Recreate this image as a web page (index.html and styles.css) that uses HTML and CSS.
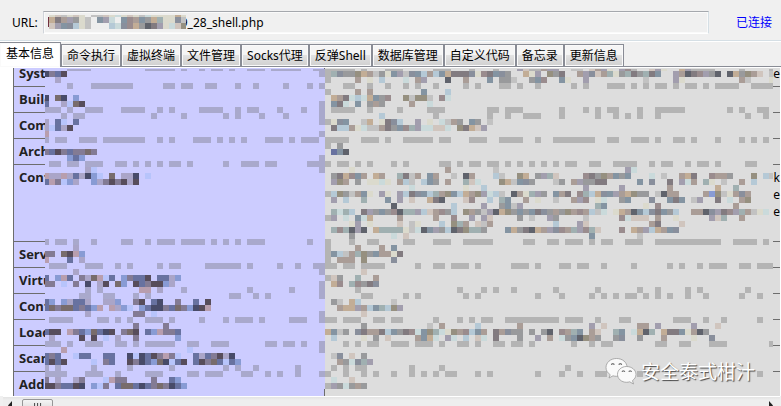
FILE: index.html
```html
<!DOCTYPE html>
<html lang="zh-CN">
<head>
<meta charset="utf-8">
<title>Shell</title>
<link rel="stylesheet" href="styles.css">
</head>
<body>
<header class="bar">
  <label for="url">URL:</label>
  <div class="field">
    <input id="url" type="text" readonly value="9_28_shell.php">
    <svg class="field-mosaic" id="url-mosaic" width="138" height="15" viewBox="48 15 138 15" shape-rendering="crispEdges" aria-hidden="true"></svg>
  </div>
  <span class="state">已连接</span>
</header>
<nav class="tabs">
  <button class="tab active">基本信息</button>
  <button class="tab">命令执行</button>
  <button class="tab">虚拟终端</button>
  <button class="tab">文件管理</button>
  <button class="tab">Socks代理</button>
  <button class="tab">反弹Shell</button>
  <button class="tab">数据库管理</button>
  <button class="tab">自定义代码</button>
  <button class="tab">备忘录</button>
  <button class="tab">更新信息</button>
</nav>
<main class="view">
  <table class="info">
    <tr><th scope="row">Syste</th><td>Se</td></tr>
    <tr><th scope="row">Build</th><td></td></tr>
    <tr><th scope="row">Com</th><td></td></tr>
    <tr><th scope="row">Arch</th><td></td></tr>
    <tr class="tall"><th scope="row">Conf</th><td><div>k</div><div>e</div><div>je</div></td></tr>
    <tr><th scope="row">Serv</th><td></td></tr>
    <tr><th scope="row">Virtu</th><td></td></tr>
    <tr><th scope="row">Conf</th><td></td></tr>
    <tr><th scope="row">Load</th><td></td></tr>
    <tr><th scope="row">Scan</th><td></td></tr>
    <tr><th scope="row">Add</th><td></td></tr>
  </table>
  <svg class="mosaic" id="mosaic" width="728" height="320" viewBox="45 69 728 320" shape-rendering="crispEdges" aria-hidden="true"></svg>
  <div class="mark">
    <svg width="32" height="28" viewBox="0 0 32 28" aria-hidden="true">
      <g stroke="#999" stroke-width=".8">
        <path fill="#fafafa" d="M11.500 1.500C5.500 1.500 1 5.500 1 10.500c0 3 1.600 5.500 4.200 7.200L4 21l4-2.200c1.200.4 2.300.5 3.500.5 6 0 10.500-4 10.500-9s-4.500-8.800-10.500-8.800z"/>
        <path fill="#fafafa" d="M21.500 9.500c-5 0-9 3.500-9 7.900s4 7.900 9 7.900c1.200 0 2.200-.2 3.200-.5L28.500 27l-1-3.400c2.200-1.500 3.500-3.700 3.500-6.200 0-4.400-4.200-7.900-9.500-7.900z"/>
      </g>
      <g fill="none" stroke="#777" stroke-width="1.200">
        <path d="M6.500 8a1.300 1.300 0 0 1 2.600 0M14 8a1.300 1.300 0 0 1 2.600 0M17.200 15a1.200 1.200 0 0 1 2.400 0M24 15a1.200 1.200 0 0 1 2.400 0"/>
      </g>
    </svg>
    <span>安全泰式柑汁</span>
  </div>
</main>
<footer class="scroll" aria-hidden="true">
  <svg width="10" height="8" viewBox="0 0 10 8"><path d="M8 1v9L4 5.500z" fill="#222"/></svg>
  <span class="thumb"><i></i><i></i><i></i></span>
  <svg class="end" width="10" height="8" viewBox="0 0 10 8"><path d="M2 1v9l4-4.500z" fill="#222"/></svg>
</footer>
<script src="mosaic.js"></script>
</body>
</html>
```
FILE: styles.css
```css
* { box-sizing: border-box; }
html, body { height: 100%; }
body {
  margin: 0;
  display: flex;
  flex-direction: column;
  overflow: hidden;
  background: #f0f0f0;
  color: #000;
  font: 12px/16px "Noto Sans", "Noto Sans CJK SC", sans-serif;
}
.bar {
  flex: none;
  display: flex;
  align-items: center;
  gap: 5px;
  padding: 11px 9px 6px 12px;
  border-bottom: 1px solid #d5dfe5;
}
.field { flex: 1; position: relative; display: flex; }
.field input {
  width: 100%;
  height: 23px;
  padding: 0 0 0 137px;
  border: 1px solid #a5a8ad;
  border-color: #a5a8ad #d5dfe5 #fff #d0d4da;
  box-shadow: inset 0 0 0 1px #fafafa;
  background: #f0f0f0;
  font: inherit;
  outline: 0;
}
.field-mosaic { position: absolute; left: 5px; top: 4px; }
.state { color: #00f; margin-left: 22px; }
.tabs {
  flex: none;
  display: flex;
  align-items: flex-end;
  height: 26px;
  padding-top: 1px;
  background: linear-gradient(#fff 1px, #f0f0f0 1px);
  box-shadow: inset 0 -1px #898c95;
}
.tab {
  height: 23px;
  padding: 0 5px;
  border: 1px solid #898c95;
  background: linear-gradient(#f5f5f5 45%, #e2e2e2 50%, #d0d0d0);
  box-shadow: inset 0 0 0 1px #fafafa;
  color: #000;
  font: inherit;
  white-space: nowrap;
}
.tab.active {
  height: 25px;
  padding: 0 6px 2px;
  border-width: 1px 1px 0 0;
  background: #fff;
}
.view {
  flex: 1;
  min-height: 0;
  position: relative;
  overflow: hidden;
  padding: 0 1px 0 13px;
  border-top: 1px solid #fff;
  background: #fff;
}
.info {
  width: 100%;
  margin-top: -7px;
  border-collapse: separate;
  border-spacing: 0;
  border-left: 1px solid #6d6d6d;
  table-layout: fixed;
}
.info tr { height: 26px; }
.info tr.tall { height: 77px; }
.info th, .info td {
  padding: 4px 5px;
  border-bottom: 1px solid #6d6d6d;
  vertical-align: top;
  line-height: 17px;
}
.info th {
  width: 311px;
  border-right: 1px solid #6d6d6d;
  background: #ccf;
  color: #222;
  font-family: "Open Sans", sans-serif;
  font-size: 13px;
  text-align: left;
}
.info td {
  padding-right: 0;
  background: #ddd;
  text-align: right;
}
.mosaic { position: absolute; left: 45px; top: 1px; }
.mark {
  position: absolute;
  right: 26px;
  bottom: 10px;
  display: flex;
  align-items: center;
  gap: 4px;
  color: #fff;
  font: 19px/30px "Noto Sans CJK SC", sans-serif;
  text-shadow: 1px 1px 1px #444;
}
.scroll {
  flex: none;
  display: flex;
  gap: 8px;
  height: 10px;
  margin: 0 1px 0 3px;
  padding: 2px 3px 0 1px;
  border-top: 1px solid #fff;
  background: linear-gradient(#e3e3e3, #eee 3px);
}
.scroll svg { margin-top: 1px; }
.thumb {
  display: flex;
  justify-content: center;
  gap: 1px;
  width: 31px;
  height: 12px;
  padding-top: 3px;
  border: 1px solid #979797;
  border-radius: 2px;
  background: linear-gradient(#f5f5f5, #dcdcdc);
}
.thumb i { width: 2px; height: 7px; background: #555; border-right: 1px solid #ddd; }
.scroll .end { margin-left: auto; }
```
FILE: mosaic.js
```js
// Privacy mosaic: 6px cells, column c starts at 6c + 1, row r at 6r + 71.
const NS = "http://www.w3.org/2000/svg";
const palette = {
  a: "#484b69", b: "#837b94", c: "#aaa5c8", d: "#889bd4", e: "#574d5b", f: "#b89eae",
  g: "#6872a0", h: "#b7c4fb", i: "#786c6c",
  k: "#60636c", l: "#898f9c", m: "#999a9c", n: "#aa9d97", o: "#c2ad96", p: "#b5c9d6",
  q: "#d0c5be", r: "#8494a2", s: "#c2c2c2", t: "#827b80", u: "#dbdacd", v: "#cadadb",
  w: "#a29eae", x: "#a0b0b1", y: "#969080", z: "#9a8c8e"
};

function rect(svg, x, y, w, h, fill) {
  const el = document.createElementNS(NS, "rect");
  el.setAttribute("x", x);
  el.setAttribute("y", y);
  el.setAttribute("width", w);
  el.setAttribute("height", h);
  el.setAttribute("fill", fill);
  svg.appendChild(el);
}

const svg = document.getElementById("mosaic");
rect(svg, 45, 69, 280, 320, "#ccccff");
rect(svg, 325, 69, 448, 320, "#dddddd");

// Grey runs left over from the table rules.
const rules = {
  "-1": "11-14 24-28 30 33 35-36 38 41-43 45-49 52 53-58 60 64-66 72-74 78 82 86-89 92 98-100 105 110 114-118 123 128",
  0: "53 54",
  1: "54",
  2: "11 15-21 27-28 30-31 34-35 39 42 47 51 53 57-58 61 64 67 69 72 77 79 83-84 86 89 95 97 101-103 105 107 109-110 112 114-115 117 119-122 125-128",
  3: "54",
  5: "53",
  6: "7-9 11 14-16 20-23 26 28 33-36 39 41-42 46 50 53 55-58 61 66 71-73 81-82 84-86 93 97 99 101-102 106 109-113 121 123 126-127",
  7: "10 12-13 25 30 37 39 43 47 53 72 81 84 87-89 93 99 102 104 106 109 124 127",
  8: "53 54",
  10: "53",
  11: "7 9-10 13-15 17-23 26 28 32-34 36 38 40 44-46 48 50-52 54-57 60-62 64 67-71 73-74 78-80 83-86 89 92-98 101-102 105-107 109 112-113 115 119 123 125 127",
  12: "54",
  14: "53",
  15: "8-9 11-12 14-16 19-20 22 24 26 28-29 31 37 40-42 44-45 51-54 56-57 59 61 65 67 73-74 76 78-79 81-82 84 86 88 90 92 94-95 98-99 102-105 108 110-111 114 116-117 119 124-125",
  16: "53",
  20: "54",
  24: "54",
  28: "7 9-10 12 15 20-21 24 26-28 30-33 35 37 39 41-43 51 54 58 61-62 67-68 72-74 77-81 87-88 91-92 94-96 98 100-101 104-106 109-119 122-125 127",
  29: "54",
  30: "54",
  31: "54",
  32: "8-10 14-16 19 21 26 28-29 34-39 41 46 49 52-55 57-58 60-63 69 72-73 75-77 79 85-87 89 93-94 96-97 100 105 111 113 116 118-120 123-124 126-128",
  33: "53",
  34: "54",
  35: "53",
  36: "14 16 30 41 48 53 59 76 80 82 85 92 99 106 109 114 116 124",
  37: "13-14 17-18 22 24 38-39 42 44 53 60-61 67 69 77 79 89 93 98 100 102 104-105 107 109 111 114 117 123 126",
  40: "53",
  41: "8-11 16-17 19 21 24-26 28 33 37 39-41 43 48-50 53-55 57-59 62-63 65-66 72 76 78 80-81 84-92 94-96 99 103-104 112-114 117 120 126",
  45: "7-9 11 14-16 19-20 22 24-28 31-32 35-37 44-45 47-48 50 53 57 59 61-62 65-67 69-71 73 76-77 79 82-83 85-86 88 95 98 100-101 109-110 113-114 118-120 128",
  46: "53",
  49: "7 9 15 21 28 37 39 42 49 55 57 59-60 68 73 94",
  50: "7-10 14-16 19 24-26 31-32 34-36 40-41 44 46 49 53-54 57 60 62 65 68 70 72 74-75 79 81 89 93 96 99-100 106 126",
  52: "54"
};
for (const [row, runs] of Object.entries(rules)) {
  for (const run of runs.split(" ")) {
    const [from, to = from] = run.split("-").map(Number);
    for (let c = from; c <= to; c++) {
      rect(svg, 6 * c + 1, 6 * row + 71, 6, 6, c < 54 ? "#a9a9cc" : "#b4b4b4");
    }
  }
}

// Coloured runs left over from text: [row, first column, cells].
const text = [
  [0, 7, "abge"], [1, 9, "c"], [4, 7, "a.ia.d"], [5, 7, "g..chie"], [8, 7, "c.gh.g"], [9, 7, "chgce"], [10, 7, "f"],
  [13, 7, "bgebgbbib"], [14, 11, "dgd"], [16, 14, "ch"],
  [17, 7, "fccfcgcadh.i.cca.h"], [18, 7, "gfbhdc..dcbebece"],
  [29, 12, "c"], [30, 7, "bb.iefd"], [31, 7, "f...g.c"], [33, 12, "c"],
  [34, 7, "g.dfg.bcifhg.dbgge.ggcd"], [35, 7, "bb.h.b.a.ce.id.egbeedc"], [36, 23, "ff.c"],
  [38, 7, "gd.dcggc..ccd..be.ga..b..g.e"], [39, 7, "gibiigbgdf.fcdh.dgaabgibdaef"], [40, 14, "c.......bb.h"],
  [42, 22, "b....b"], [43, 7, "gee.fbgdigae.bie.gdfbbg"], [44, 8, "c....e.e.h.c..b......d"], [46, 10, "f....................h"],
  [47, 7, "gbg..hgg..gg..ahagebfbh..gcgbeca"], [48, 7, "gege....h.bg..ebagdiahge.gebighgd"],
  [51, 7, "b.c..cb...hfbb....b..gd"], [52, 7, "eebggea.dhb.giigagbibagd"],
  [-1, 86, "wq..nww..ss.qnwu.wz...qwu..ow.."],
  [0, 55, "xlmmyonsmurwslrpnprotttluztrlm"], [0, 87, "ouw.ymt..nwlqnxumxtmxtr..wnktzwmk.komynq.s"],
  [1, 59, "n.u.p...v.nw...k..n...r.mms..m"], [1, 87, "..rz..ru..w.........s....wu.........ns...u"],
  [3, 59, "n.n........r...p"], [4, 55, "ontvpvormz..ysyys.zv"], [5, 55, "rtv.r.mnm....n..v"],
  [7, 63, "p"], [8, 55, "ulr..so.utlp..w.u.vsnm.rm.s"], [9, 55, "tppnuvssntmrzxwvvqqv.ytoqw"],
  [12, 56, "m"], [13, 55, "grk"],
  [16, 58, "u...............n.......s"], [16, 104, "wv"],
  [17, 55, "mtozrn.on..xtsn.rn..s.kn...ps..yo"], [17, 89, "mwxq....ztmynrmr...v.s..not..znnm...y.ps..o"],
  [18, 55, "wyn.m.uuvu.nps.prm.n..xqv...yos"], [18, 86, "rlm...sm.nwmmtt.....r.l..t.wvn.xu.s..n.p"],
  [19, 68, "v........u..p"], [19, 97, "w.....w.......n.......o..x"],
  [20, 55, "pymsnru.wu.wptlrpxnyrponywvps.kn"], [20, 87, "uxwm.rnt.zxpolrwnoymm.sknn....ndysunln"],
  [21, 55, "w.p..x...r.w.q..otk...qz..p.xr"], [21, 87, "n.u..s..nwz.uv..mr...l..rtr.sw..t.v.ny"],
  [22, 65, "k.........p....w..mrs"], [22, 86, "w............xr......u.z............n"],
  [23, 55, "xvxp.twmrmzkxxwpqnzmp.ynmswkoymr"], [23, 87, "mrtlmnmynznpsv.uonkrpltrmp..nnklwtzwxnsuv"],
  [24, 55, "w.v.rvo....n.....n..z..w.wq"], [24, 86, "m.s..wm....s.....zvqqq.n..u.....wqx..n"],
  [25, 58, "uw.u....q.su...p.yxn.qsn"], [25, 92, "p...wq..........nt...q"],
  [26, 55, "xzxkwk.oxxxxusvkrwmpktyxxm...ron"], [26, 86, "mtkonwlznxwzxq...z.onwponrl"],
  [27, 58, "m......v.q"], [27, 98, "r.......s"],
  [29, 59, "n...n.r"], [30, 55, "rpsnxymrnnut"], [31, 56, "nnn.y....l"],
  [33, 60, "q"], [34, 55, "qm..x..n"], [35, 55, "oz.xzmtl"],
  [38, 55, "ms.op.....s"], [39, 56, "noownprxpyw"], [40, 60, "q"],
  [42, 60, "m..........s.n.....p......n"], [42, 98, "w.q.....nn.w.....w...q"],
  [43, 54, "orsm.ltnntprmtzvryxvuynzprn.tnlmm"], [43, 88, "m.mk.znxr.nq..xr.vokx.ottrunkm"],
  [44, 55, "p....u.m.q....nrov.wv.p.qv.t"], [44, 86, "m..w.n.vmrkynm..ml..m...n....u..l"],
  [47, 55, "sl.q.m"], [48, 56, "nmvlxw"], [51, 55, "v..q"], [52, 55, "wmvmnm"]
];
for (const [row, col, cells] of text) {
  [...cells].forEach((key, i) => {
    if (key !== ".") rect(svg, 6 * (col + i) + 1, 6 * row + 71, 6, 6, palette[key]);
  });
}

// Mosaic over the start of the address.
const url = document.getElementById("url-mosaic");
rect(url, 49, 15, 136, 14, "#eeeeee");
const urlRows = ["uqsuqu.ssquvuqusvuuuuou", "otnwmus.rwv.rznrmoxuuls", "qwrlpus...pvlzomktwuvqy"];
urlRows.forEach((cells, r) => {
  [...cells].forEach((key, i) => {
    if (key !== ".") rect(url, 49 + 6 * i, r ? 11 + 6 * r : 15, 6, r ? 6 : 2, palette[key]);
  });
});
rect(url, 48, 17, 1, 10, "#703040");
```
